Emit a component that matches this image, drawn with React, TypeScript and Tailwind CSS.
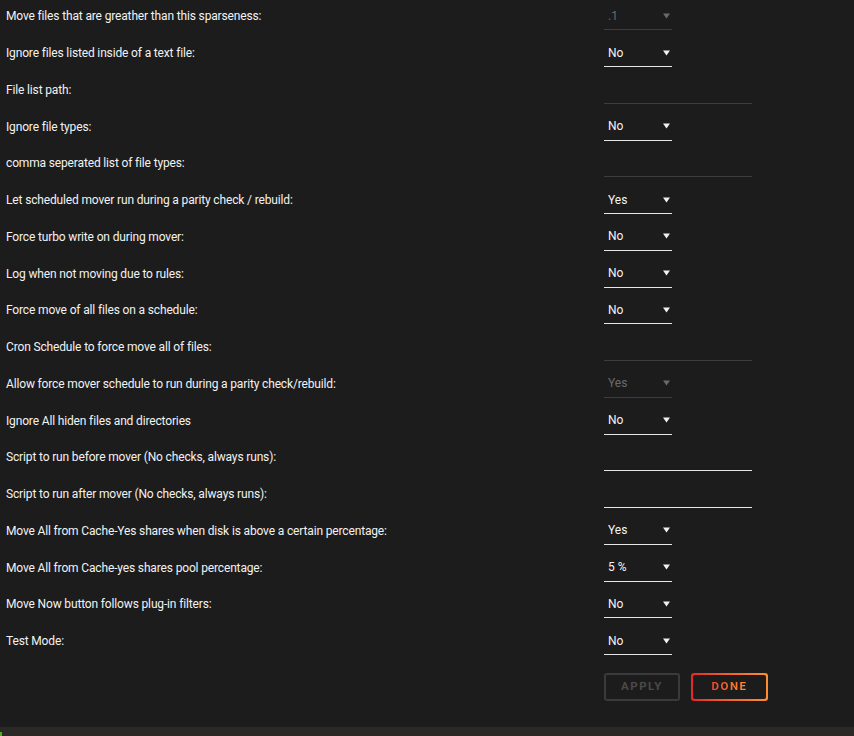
import React from "react";

type Row =
  | { label: string; kind: "select"; value: string; disabled?: boolean }
  | { label: string; kind: "input"; disabled?: boolean };

const rows: Row[] = [
  { label: "Move files that are greather than this sparseness:", kind: "select", value: ".1", disabled: true },
  { label: "Ignore files listed inside of a text file:", kind: "select", value: "No" },
  { label: "File list path:", kind: "input", disabled: true },
  { label: "Ignore file types:", kind: "select", value: "No" },
  { label: "comma seperated list of file types:", kind: "input", disabled: true },
  { label: "Let scheduled mover run during a parity check / rebuild:", kind: "select", value: "Yes" },
  { label: "Force turbo write on during mover:", kind: "select", value: "No" },
  { label: "Log when not moving due to rules:", kind: "select", value: "No" },
  { label: "Force move of all files on a schedule:", kind: "select", value: "No" },
  { label: "Cron Schedule to force move all of files:", kind: "input", disabled: true },
  { label: "Allow force mover schedule to run during a parity check/rebuild:", kind: "select", value: "Yes", disabled: true },
  { label: "Ignore All hiden files and directories", kind: "select", value: "No" },
  { label: "Script to run before mover (No checks, always runs):", kind: "input" },
  { label: "Script to run after mover (No checks, always runs):", kind: "input" },
  { label: "Move All from Cache-Yes shares when disk is above a certain percentage:", kind: "select", value: "Yes" },
  { label: "Move All from Cache-yes shares pool percentage:", kind: "select", value: "5 %" },
  { label: "Move Now button follows plug-in filters:", kind: "select", value: "No" },
  { label: "Test Mode:", kind: "select", value: "No" },
];

function Arrow({ disabled }: { disabled?: boolean }) {
  return (
    <svg width="7" height="6" viewBox="0 0 7 6" className="shrink-0">
      <path d="M0 0.5 H7 L3.5 5.5 Z" fill={disabled ? "#6a6a6a" : "#f0f0f0"} />
    </svg>
  );
}

export default function App() {
  return (
    <div
      className="w-[854px] h-[736px] flex flex-col bg-[#1c1c1c] overflow-hidden"
      style={{ fontFamily: "Roboto, 'Noto Sans', sans-serif" }}
    >
      <div className="flex-1 flex flex-col mt-[-2px]">
        {rows.map((r, i) => (
          <div key={i} className="flex items-center h-[36.76px] shrink-0">
            <div className="w-[604px] pl-[6px] text-[12px] text-[#f2f2f2] tracking-[-0.15px]">{r.label}</div>
            {r.kind === "select" ? (
              <div
                className={
                  "w-[68px] h-[28px] flex items-center justify-between pl-[4px] pr-[2px] border-b text-[12px] " +
                  (r.disabled ? "border-[#3d3d3d] text-[#6a6a6a]" : "border-[#e6e6e6] text-[#f4f4f4]")
                }
              >
                <span>{r.value}</span>
                <Arrow disabled={r.disabled} />
              </div>
            ) : (
              <div
                className={
                  "w-[148px] h-[28px] border-b " +
                  (r.disabled ? "border-[#3d3d3d]" : "border-[#e6e6e6]")
                }
              />
            )}
          </div>
        ))}
        <div className="flex gap-[11px] pl-[604px] mt-[13px]">
          <div className="w-[76px] h-[28px] rounded-[3px] border-2 border-[#3a3a3a] flex items-center justify-center text-[11.5px] font-bold tracking-[1.5px] text-[#4a4a4a]">
            APPLY
          </div>
          <div className="w-[77px] h-[28px] rounded-[3px] p-[2px] bg-gradient-to-r from-[#e22828] to-[#ff8d30]">
            <div className="w-full h-full rounded-[2px] bg-[#1c1c1c] flex items-center justify-center">
              <span className="text-[11.5px] font-bold tracking-[1.5px] bg-gradient-to-r from-[#f04a28] to-[#ff8d30] bg-clip-text text-transparent">
                DONE
              </span>
            </div>
          </div>
        </div>
      </div>
      <div className="h-[9px] bg-[#2a2927] relative">
        <div className="absolute left-0 top-[5px] w-[2px] h-[4px] bg-[#4caf1a]" />
      </div>
    </div>
  );
}
